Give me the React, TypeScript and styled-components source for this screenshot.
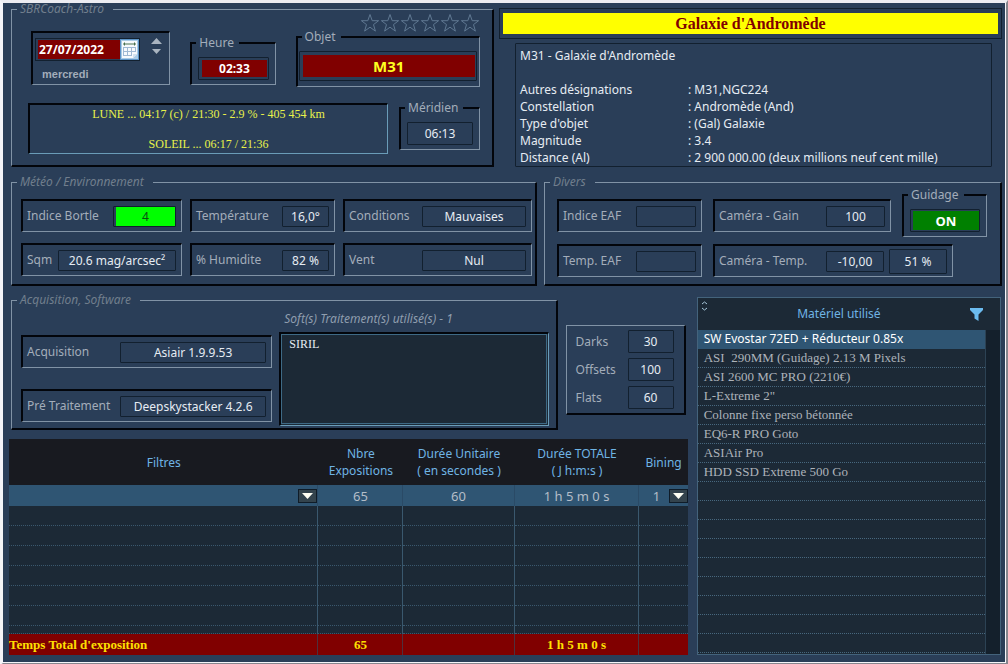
import React from 'react';
import styled, { createGlobalStyle } from 'styled-components';

const c = {
  bg: '#2a3e58',
  dark: '#1c2936',
  light: '#8193a6',
  black: '#02050b',
  edge: '#12202f',
  label: '#a3adba',
  legend: '#717e8d',
  text: '#e6ecf3',
  accent: '#6fb4e4',
  select: '#2f5573',
  grid: '#3a586e',
  maroon: '#800000',
  yellow: '#ffff00',
};

const sans = '"Noto Sans", "Open Sans", sans-serif';
const serif = '"Liberation Serif", "Times New Roman", serif';

/* A part's share of its row: the number is both its ideal width and its growth. */
const share = (n: number) => (n === 0 ? '0 0 auto' : n === 1 ? '1 1 0' : `${n} 1 ${n}px`);

const Global = createGlobalStyle`
  *, *::before, *::after { box-sizing: border-box; }
  body { margin: 0; background: #85858d; font: 12px/16px ${sans}; color: ${c.text}; }
  button, input, select, textarea { font: inherit; color: inherit; }
`;

const Window = styled.main`
  min-height: 100vh;
  display: flex;
  flex-direction: column;
  background: ${c.bg};
  border-style: solid;
  border-width: 3px 2px 2px 3px;
  border-color: #ececf1 #85858d #85858d #f4f4f8;
  box-shadow: inset -1px -1px 0 #f4f4f8;
`;

const Band = styled.div<{ $gap: number; $top?: number }>`
  display: flex;
  gap: ${p => p.$gap}px;
  padding: ${p => p.$top ?? 0}px 4px 0 8px;
`;

const Group = styled.fieldset<{ $grow: number }>`
  flex: ${p => share(p.$grow)};
  min-width: 0;
  margin: 0;
  padding: 0;
  border-style: solid;
  border-width: 1px 2px 2px 1px;
  border-color: ${c.light} ${c.black} ${c.black} ${c.light};
`;

const GroupLegend = styled.legend`
  margin-left: 5px;
  padding: 0 9px 0 3px;
  line-height: 12px;
  font-style: italic;
  color: ${c.legend};
`;

const GroupBody = styled.div<{ $pad: string }>`
  padding: ${p => p.$pad};
`;

const sunken = `
  border-style: solid;
  border-width: 2px 1px 1px 2px;
  border-color: ${c.black} ${c.light} ${c.light} ${c.black};
`;

const Frame = styled.fieldset`
  flex: 1 1 0;
  min-width: 0;
  margin: 0;
  padding: 0;
  ${sunken}
`;

const FrameLegend = styled.legend`
  margin-left: 4px;
  padding: 0 5px 0 3px;
  line-height: 14px;
  color: ${c.label};
`;

const FrameBody = styled.div<{ $wide?: boolean }>`
  display: flex;
  padding: ${p => (p.$wide ? '7px 2px 5px 1px' : '7px 6px 4px')};
`;

const Cell = styled.div<{ $grow?: number }>`
  flex: ${p => share(p.$grow ?? 1)};
  min-width: 0;
  height: 33px;
  display: flex;
  align-items: center;
  padding: 0 5px 0 4px;
  gap: 5px;
  ${sunken}
`;

const Label = styled.label<{ $w: number }>`
  flex: none;
  width: ${p => p.$w - 5}px;
  white-space: nowrap;
  color: ${c.label};
`;

const Field = styled.input<{ $h?: number; $fill?: string; $ink?: string; $inset?: string; $bold?: boolean; $size?: number }>`
  flex: 1 1 0;
  width: 0;
  min-width: 0;
  height: ${p => p.$h ?? 21}px;
  padding: ${p => p.$inset ?? '0'};
  border: 1px solid ${c.edge};
  border-radius: 1px;
  outline: 0;
  text-align: center;
  background: ${p => p.$fill ?? 'transparent'} content-box;
  color: ${p => p.$ink ?? c.text};
  font-weight: ${p => (p.$bold ? 700 : 400)};
  font-size: ${p => p.$size ?? 12}px;
`;

const Stack = styled.div<{ $gap: number; $grow?: number }>`
  flex: ${p => share(p.$grow ?? 1)};
  min-width: 0;
  display: flex;
  flex-direction: column;
  gap: ${p => p.$gap}px;
`;

const Line = styled.div<{ $gap: number; $pad?: string }>`
  display: flex;
  align-items: flex-end;
  gap: ${p => p.$gap}px;
  padding: ${p => p.$pad ?? 0};
`;

/* header */
const DateBox = styled.div`
  flex: ${share(139)};
  height: 54px;
  margin-bottom: 2px;
  padding: 5px 6px 0 2px;
  ${sunken}
`;
const DateRow = styled.div`
  display: flex;
  justify-content: space-between;
  align-items: flex-start;
`;
const DateField = styled.div`
  display: flex;
  width: 105px;
  height: 23px;
  border: 1px solid ${c.edge};
`;
const DateInput = styled.input`
  flex: 1;
  width: 0;
  margin: 1px 0 1px 2px;
  padding: 0 0 0 1px;
  border: 0;
  background: ${c.maroon};
  color: #fff;
  font-weight: 700;
`;
const IconButton = styled.button`
  display: flex;
  padding: 0;
  border: 0;
  background: none;
  cursor: pointer;
`;
const Spinner = styled.div`
  display: flex;
  flex-direction: column;
  gap: 5px;
`;
const Weekday = styled.div`
  padding: 6px 0 0 7px;
  font: bold 11px/14px "Liberation Sans", Arial, sans-serif;
  color: ${c.label};
`;
const TimeSlot = styled.div<{ $grow: number; $lift: number }>`
  flex: ${p => share(p.$grow)};
  min-width: 0;
  display: flex;
  margin-bottom: ${p => p.$lift}px;
`;
const Stars = styled.div`
  display: flex;
  justify-content: flex-end;
  align-items: center;
  height: 15px;
`;
const Ephemeris = styled.div`
  flex: ${share(360)};
  height: 51px;
  padding-top: 2px;
  border: solid #6a9cb8;
  border-width: 2px 1px 1px 2px;
  border-top-color: ${c.black};
  border-left-color: ${c.black};
  text-align: center;
  font: 12px/15px ${serif};
  color: #e8f24a;
  p { margin: 0 0 15px; }
`;
const Subject = styled(Stack)`
  padding-top: 5px;
`;
const Title = styled.h1`
  margin: 0;
  padding: 4px 3px;
  border: 1px solid ${c.edge};
  background: ${c.yellow} content-box;
  text-align: center;
  font: bold 16px/21px ${serif};
  color: ${c.maroon};
`;
const Info = styled.section`
  margin: 0 10px 0 16px;
  padding: 3px 4px 0;
  border: 1px solid ${c.edge};
  border-radius: 1px;
  line-height: 17px;
  p { margin: 0 0 17px; }
  dl { margin: 0; display: grid; grid-template-columns: 168px 1fr; }
  dd { margin: 0; }
`;

const DiversGrid = styled.div`
  display: grid;
  grid-template-columns: 145fr 178fr 85fr;
  column-gap: 11px;
  row-gap: 7px;
  align-items: start;
  > ${Cell} { margin-top: 11px; }
  > ${Cell}:nth-child(n + 4) { margin-top: 0; }
  > ${Cell}:last-child { grid-column: 2 / 4; margin-right: 34px; }
`;

/* lower area */
const Lower = styled.div`
  display: flex;
  align-items: stretch;
  gap: 9px;
  padding: 8px 5px 8px 6px;
`;
const AcqBody = styled.div`
  display: flex;
  align-items: flex-end;
  gap: 7px;
`;
const AcqFields = styled(Stack)`
  padding-bottom: 4px;
`;
const SoftLabel = styled.label`
  padding-left: 5px;
  font-style: italic;
  color: #8f9dae;
`;
const SoftText = styled.textarea`
  display: block;
  width: 100%;
  height: 94px;
  padding: 2px 8px;
  resize: none;
  outline: 1px solid #3e6a86;
  outline-offset: -3px;
  border: solid #6a9cb8;
  border-width: 2px 1px 1px 2px;
  border-top-color: ${c.black};
  border-left-color: ${c.black};
  background: ${c.dark};
  font: 12px/16px ${serif};
`;
const Frames = styled.div`
  flex: ${share(120)};
  min-width: 0;
  display: flex;
  flex-direction: column;
  gap: 5px;
  margin: 0 2px 15px 0;
  padding: 4px 10px 4px 9px;
  border: solid ${c.black};
  border-width: 1px 2px 2px 1px;
  border-top-color: ${c.light};
  border-left-color: ${c.light};
`;
const FramesRow = styled.div`
  display: flex;
  align-items: center;
  gap: 5px;
`;

const Exposures = styled.table`
  width: 100%;
  margin-top: 9px;
  border-spacing: 0;
  table-layout: fixed;
  background: ${c.dark};
  text-align: center;
  th, td { padding: 0; }
  thead th {
    height: 46px;
    background: #181a20;
    color: ${c.accent};
    font-weight: 400;
    line-height: 17px;
  }
  tbody td { height: 20px; border-right: 1px solid ${c.grid}; border-bottom: 1px dotted ${c.grid}; color: #b4bdc8; }
  tbody tr:first-child td { height: 21px; background: ${c.select}; border-bottom: 0; border-right-color: #2a4a66; font-size: 13px; }
  tbody tr:last-child td { height: 8px; }
  tbody td:last-child, tfoot td:last-child { border-right: 0; }
  tfoot th, tfoot td {
    height: 21px;
    background: ${c.maroon};
    border-right: 1px solid #50303c;
    font: bold 13px/16px ${serif};
    color: #ffe000;
  }
  tfoot th { text-align: left; }
`;
const Picker = styled.div`
  position: relative;
  display: flex;
  svg { position: absolute; right: 0; top: 3px; pointer-events: none; }
`;
const Select = styled.select`
  appearance: none;
  width: 100%;
  height: 20px;
  padding: 0 16px 0 2px;
  border: 0;
  background: transparent;
  text-align: center;
  color: #b4bdc8;
`;

const Gear = styled.section`
  flex: ${share(304)};
  display: grid;
  grid-template-columns: 1fr 15px;
  margin-top: 3px;
  border: 1px solid #44637c;
  background: ${c.dark};
`;
const GearTable = styled.table`
  width: 100%;
  align-self: start;
  border-spacing: 0;
  td { height: 19px; padding: 0 6px; border-bottom: 1px dotted #47677e; white-space: pre; font: 13px/16px ${serif}; color: #adb3ba; }
  tbody tr:first-child td { background: ${c.select}; border-bottom-color: ${c.select}; font: 12px/16px ${sans}; color: #fff; }
`;
const GearHead = styled.th`
  height: 32px;
  padding: 0;
  font-weight: 400;
  color: ${c.accent};
  div { display: flex; align-items: center; height: 32px; padding: 0 2px 0 3px; }
  span { flex: 1; }
  button:first-child { align-self: flex-start; padding-top: 3px; }
`;
const Track = styled.div`
  margin-top: 32px;
  border-left: 1px solid #2c4254;
  background: #14202c;
`;

const Star = () => (
  <svg width="20" height="20" viewBox="0 0 20 20" fill="none" stroke="#5f7892" strokeWidth="1">
    <path d="M10 1.500 L12.2 7.700 H18.6 L13.5 11.600 L15.4 18.100 L10 14.200 L4.6 18.100 L6.5 11.600 L1.4 7.700 H7.8 Z" />
  </svg>
);

const Calendar = () => (
  <svg width="19" height="21" viewBox="0 0 19 21">
    <path d="M0 0h19v21H0z" fill="#5b93c6" />
    <path d="M1 1h17v19H1z" fill="#a9cbe6" />
    <path d="M2 2h15v13l-4 4H2z" fill="#f6fafd" />
    <path d="M17 15l-4 4v-4z" fill="#d3e2ef" />
    <path d="M4 5h11" stroke="#49704f" />
    <path d="M3 5l2-2v4zM16 5l-2-2v4z" fill="#49704f" />
    <path d="M3 8.500h13M3 12.500h13M3 16.500h9M3.500 8v9M7.500 8v9M11.500 8v9M15.500 8v5" fill="none" stroke="#9fb9d4" />
  </svg>
);

const DropArrow = () => (
  <svg width="19" height="14" viewBox="0 0 19 14">
    <rect x="0.500" y="0.500" width="18" height="13" fill="#33434d" stroke="#0f1c28" />
    <path d="M4 4h11L9.500 10z" fill="#fffff4" />
  </svg>
);

type EntryProps = { id: string; label: string; w: number; value: string } & Partial<React.ComponentProps<typeof Field>>;
const Entry = ({ id, label, w, value, ...rest }: EntryProps) => (
  <>
    <Label htmlFor={id} $w={w}>{label}</Label>
    <Field id={id} defaultValue={value} {...rest} />
  </>
);

const facts = [
  ['Autres désignations', 'M31,NGC224'],
  ['Constellation', 'Andromède (And)'],
  ["Type d'objet", '(Gal) Galaxie'],
  ['Magnitude', '3.4'],
  ['Distance (Al)', '2 900 000.00 (deux millions neuf cent mille)'],
];

const gear = [
  'SW Evostar 72ED + Réducteur 0.85x',
  'ASI  290MM (Guidage) 2.13 M Pixels',
  'ASI 2600 MC PRO (2210€)',
  'L-Extreme 2"',
  'Colonne fixe perso bétonnée',
  'EQ6-R PRO Goto',
  'ASIAir Pro',
  'HDD SSD Extreme 500 Go',
  ...Array(9).fill(''),
];

export default function App() {
  return (
    <Window>
      <Global />
      <Band $gap={5}>
        <Group $grow={483}>
          <GroupLegend>SBRCoach-Astro</GroupLegend>
          <GroupBody $pad="0 12px 9px 16px">
            <Line $gap={20} $pad="0 0 0 3px">
              <DateBox>
                <DateRow>
                  <DateField>
                    <DateInput aria-label="Date" defaultValue="27/07/2022" />
                    <IconButton type="button" aria-label="Calendrier"><Calendar /></IconButton>
                  </DateField>
                  <Spinner>
                    <IconButton type="button" aria-label="Jour suivant">
                      <svg width="13" height="6" viewBox="0 0 13 6"><path d="M1 6L6.500 0L12 6z" fill="#a9b4c0" /></svg>
                    </IconButton>
                    <IconButton type="button" aria-label="Jour précédent">
                      <svg width="13" height="6" viewBox="0 0 13 6"><path d="M2 0h9L6.500 5z" fill="#a9b4c0" /></svg>
                    </IconButton>
                  </Spinner>
                </DateRow>
                <Weekday>mercredi</Weekday>
              </DateBox>
              <TimeSlot $grow={85} $lift={2}>
                <Frame>
                  <FrameLegend>Heure</FrameLegend>
                  <FrameBody>
                    <Field aria-label="Heure" defaultValue="02:33" $h={23} $fill={c.maroon} $ink="#fff" $inset="2px 1px 2px 3px" $bold />
                  </FrameBody>
                </Frame>
              </TimeSlot>
              <Stack $gap={0} $grow={184}>
                <Stars>
                  {[1, 2, 3, 4, 5, 6].map(n => (
                    <IconButton key={n} type="button" aria-label={`Note ${n}`}><Star /></IconButton>
                  ))}
                </Stars>
                <Frame>
                  <FrameLegend>Objet</FrameLegend>
                  <FrameBody $wide>
                    <Field aria-label="Objet" defaultValue="M31" $h={30} $fill={c.maroon} $ink="#ffff20" $inset="3px 1px 3px 3px" $bold $size={15} />
                  </FrameBody>
                </Frame>
              </Stack>
            </Line>
            <Line $gap={11} $pad="14px 0 0">
              <Ephemeris>
                <p>LUNE ... 04:17 (c) / 21:30 - 2.9 % - 405 454 km</p>
                <p>SOLEIL ... 06:17 / 21:36</p>
              </Ephemeris>
              <TimeSlot $grow={81} $lift={4}>
                <Frame>
                  <FrameLegend>Méridien</FrameLegend>
                  <FrameBody>
                    <Field aria-label="Méridien" defaultValue="06:13" $h={23} />
                  </FrameBody>
                </Frame>
              </TimeSlot>
            </Line>
          </GroupBody>
        </Group>
        <Subject $gap={4} $grow={503}>
          <Title>Galaxie d'Andromède</Title>
          <Info>
            <p>M31 - Galaxie d'Andromède</p>
            <dl>
              {facts.map(([k, v]) => (
                <React.Fragment key={k}>
                  <dt>{k}</dt>
                  <dd>: {v}</dd>
                </React.Fragment>
              ))}
            </dl>
          </Info>
        </Subject>
      </Band>

      <Band $gap={7} $top={9}>
        <Group $grow={526}>
          <GroupLegend>Météo / Environnement</GroupLegend>
          <GroupBody $pad="11px 3px 8px 9px">
            <Stack $gap={11}>
              <Line $gap={8}>
                <Cell $grow={161}><Entry id="bortle" label="Indice Bortle" w={86} value="4" $fill="#00ff00" $ink="#0b4d12" $inset="0 0 0 2px" /></Cell>
                <Cell $grow={145}><Entry id="temp" label="Température" w={86} value="16,0°" /></Cell>
                <Cell $grow={189}><Entry id="cond" label="Conditions" w={73} value="Mauvaises" /></Cell>
              </Line>
              <Line $gap={8}>
                <Cell $grow={161}><Entry id="sqm" label="Sqm" w={31} value="20.6 mag/arcsec²" /></Cell>
                <Cell $grow={145}><Entry id="hum" label="% Humidite" w={86} value="82 %" /></Cell>
                <Cell $grow={189}><Entry id="vent" label="Vent" w={73} value="Nul" /></Cell>
              </Line>
            </Stack>
          </GroupBody>
        </Group>
        <Group $grow={458}>
          <GroupLegend>Divers</GroupLegend>
          <GroupBody $pad="0 13px 7px 12px">
            <DiversGrid>
              <Cell><Entry id="ieaf" label="Indice EAF" w={73} value="" /></Cell>
              <Cell><Entry id="gain" label="Caméra - Gain" w={107} value="100" /></Cell>
              <Frame>
                <FrameLegend>Guidage</FrameLegend>
                <FrameBody>
                  <Field aria-label="Guidage" defaultValue="ON" $h={23} $fill="#008000" $ink="#fff" $inset="1px 0 1px 2px" $bold $size={13} />
                </FrameBody>
              </Frame>
              <Cell><Entry id="teaf" label="Temp. EAF" w={73} value="" /></Cell>
              <Cell>
                <Entry id="ctemp" label="Caméra - Temp." w={107} value="-10,00" />
                <Field aria-label="Puissance" defaultValue="51 %" $h={25} />
              </Cell>
            </DiversGrid>
          </GroupBody>
        </Group>
      </Band>

      <Lower>
        <Stack $gap={0} $grow={678}>
          <Line $gap={8} $pad="0 0 0 2px">
            <Group $grow={546}>
              <GroupLegend>Acquisition, Software</GroupLegend>
              <GroupBody $pad="5px 7px 2px 9px">
                <AcqBody>
                  <AcqFields $gap={21} $grow={251}>
                    <Cell $grow={0}><Entry id="acq" label="Acquisition" w={93} value="Asiair 1.9.9.53" /></Cell>
                    <Cell $grow={0}><Entry id="pre" label="Pré Traitement" w={93} value="Deepskystacker 4.2.6" /></Cell>
                  </AcqFields>
                  <Stack $gap={5} $grow={269}>
                    <SoftLabel htmlFor="soft">Soft(s) Traitement(s) utilisé(s) - 1</SoftLabel>
                    <SoftText id="soft" defaultValue="SIRIL" />
                  </Stack>
                </AcqBody>
              </GroupBody>
            </Group>
            <Frames>
              <FramesRow><Entry id="darks" label="Darks" w={52} value="30" $h={23} /></FramesRow>
              <FramesRow><Entry id="offsets" label="Offsets" w={52} value="100" $h={23} /></FramesRow>
              <FramesRow><Entry id="flats" label="Flats" w={52} value="60" $h={23} /></FramesRow>
            </Frames>
          </Line>
          <Exposures>
            <colgroup>
              <col style={{ width: '45.6%' }} />
              <col style={{ width: '12.5%' }} />
              <col style={{ width: '16.4%' }} />
              <col style={{ width: '18.4%' }} />
              <col style={{ width: '7.1%' }} />
            </colgroup>
            <thead>
              <tr>
                <th>Filtres</th>
                <th>Nbre<br />Expositions</th>
                <th>Durée Unitaire<br />( en secondes )</th>
                <th>Durée TOTALE<br />( J h:m:s )</th>
                <th>Bining</th>
              </tr>
            </thead>
            <tbody>
              <tr>
                <td><Picker><Select aria-label="Filtre"><option></option></Select><DropArrow /></Picker></td>
                <td>65</td>
                <td>60</td>
                <td>1 h 5 m 0 s</td>
                <td><Picker><Select aria-label="Bining"><option>1</option></Select><DropArrow /></Picker></td>
              </tr>
              {Array.from({ length: 7 }, (_, i) => (
                <tr key={i}><td /><td /><td /><td /><td /></tr>
              ))}
            </tbody>
            <tfoot>
              <tr>
                <th>Temps Total d'exposition</th>
                <td>65</td>
                <td />
                <td>1 h 5 m 0 s</td>
                <td />
              </tr>
            </tfoot>
          </Exposures>
        </Stack>
        <Gear>
          <GearTable>
            <thead>
              <tr>
                <GearHead>
                  <div>
                    <IconButton type="button" aria-label="Trier">
                      <svg width="7" height="10" viewBox="0 0 7 10" fill="none" stroke="#a8c8dc"><path d="M1 3L3.500 1L6 3M1 7L3.500 9L6 7" /></svg>
                    </IconButton>
                    <span>Matériel utilisé</span>
                    <IconButton type="button" aria-label="Filtrer">
                      <svg width="13" height="13" viewBox="0 0 13 13"><path d="M0 0h13v2L8.500 6.500V13L4.500 10.500V6.500L0 2z" fill="#6cbcf0" /></svg>
                    </IconButton>
                  </div>
                </GearHead>
              </tr>
            </thead>
            <tbody>
              {gear.map((g, i) => (
                <tr key={i}><td>{g}</td></tr>
              ))}
            </tbody>
          </GearTable>
          <Track />
        </Gear>
      </Lower>
    </Window>
  );
}
